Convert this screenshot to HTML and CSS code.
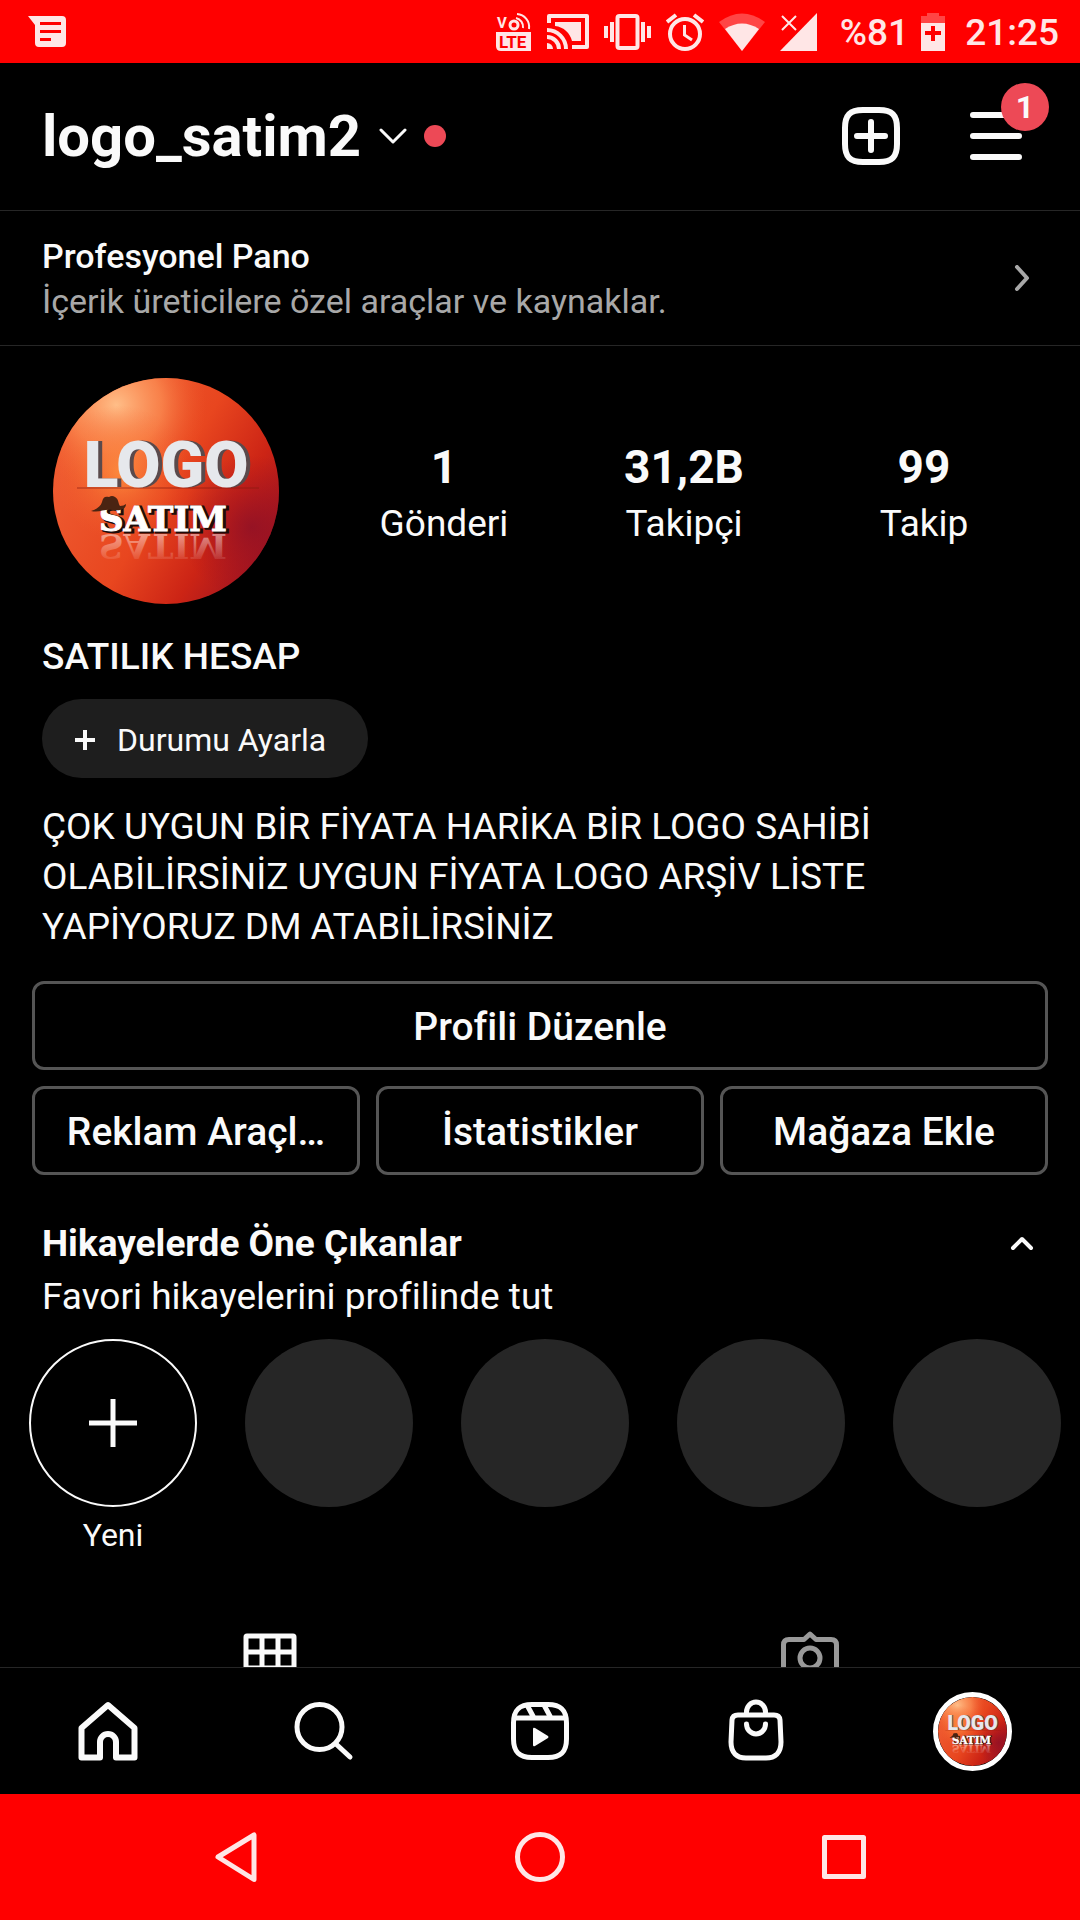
FILE: index.html
```html
<!DOCTYPE html>
<html lang="tr">
<head>
<meta charset="utf-8">
<meta name="viewport" content="width=device-width, initial-scale=1">
<title>logo_satim2</title>
<link rel="stylesheet" href="styles.css">
</head>
<body>
<svg class="defs" aria-hidden="true">
  <defs>
    <linearGradient id="ball" x1="0.1" y1="0.3" x2="0.95" y2="0.8">
      <stop offset="0" stop-color="#ee5a30"/>
      <stop offset="0.45" stop-color="#e8461f"/>
      <stop offset="0.75" stop-color="#cc2415"/>
      <stop offset="1" stop-color="#a01420"/>
    </linearGradient>
    <radialGradient id="glow" cx="0.28" cy="0.12" r="0.4">
      <stop offset="0" stop-color="#ffbe88"/>
      <stop offset="0.5" stop-color="#ff9a5c" stop-opacity="0.65"/>
      <stop offset="1" stop-color="#f4602c" stop-opacity="0"/>
    </radialGradient>
    <radialGradient id="warm" cx="0.3" cy="0.42" r="0.3">
      <stop offset="0" stop-color="#ff9440" stop-opacity="0.8"/>
      <stop offset="1" stop-color="#f4602c" stop-opacity="0"/>
    </radialGradient>
    <radialGradient id="shade" cx="0.88" cy="0.66" r="0.32">
      <stop offset="0" stop-color="#8e1026" stop-opacity="0.8"/>
      <stop offset="1" stop-color="#a01020" stop-opacity="0"/>
    </radialGradient>
    <linearGradient id="fade" x1="0" y1="0" x2="0" y2="1">
      <stop offset="0" stop-color="#fff" stop-opacity="0"/>
      <stop offset="1" stop-color="#fff" stop-opacity="0.6"/>
    </linearGradient>
    <symbol id="logo" viewBox="0 0 226 226">
      <circle cx="113" cy="113" r="113" fill="url(#ball)"/>
      <circle cx="113" cy="113" r="113" fill="url(#glow)"/>
      <circle cx="113" cy="113" r="113" fill="url(#warm)"/>
      <circle cx="113" cy="113" r="113" fill="url(#shade)"/>
      <path d="M24 110H206" stroke="#8a1a10" stroke-width="1" opacity="0.7"/>
      <text class="logo-top logo-depth" x="117" y="109" text-anchor="middle">LOGO</text>
      <text class="logo-top" x="113" y="109" text-anchor="middle">LOGO</text>
      <text class="logo-bottom logo-mirror" x="110" y="-156" text-anchor="middle" transform="scale(1 -1)">SATIM</text>
      <text class="logo-bottom logo-dark" x="112" y="154" text-anchor="middle">SATIM</text>
      <text class="logo-bottom logo-face" x="110" y="153" text-anchor="middle">SATIM</text>
      <path d="M38 133C44 131 48 128 49 124C50 119 52 118 56 119Q59 117 62 119C66 121 65 126 67 128Q71 128 73 126C73 132 66 133 59 132C51 131 46 135 38 133Z" fill="#4a2412"/>
    </symbol>
  </defs>
</svg>

<div class="screen">
  <header class="status">
    <svg class="status-note" width="38" height="32" viewBox="0 0 38 32" aria-hidden="true"><path fill="currentColor" fill-rule="evenodd" d="M0 0H34Q38 0 38 4V27Q38 31 34 31H11Q7 31 7 27V9ZM12 6V9H33V6ZM12 14V17H33V14ZM12 22V25H23V22Z"/></svg>
    <div class="status-icons">
      <svg width="36" height="42" viewBox="0 -2 36 42" aria-hidden="true">
        <text class="volte" x="1" y="15">V</text>
        <g fill="none" stroke="currentColor">
          <circle cx="18" cy="12" r="4" stroke-width="3"/>
          <path d="M20 5A9 9 0 0 1 27 15M21 1A13 13 0 0 1 33 16" stroke-width="2"/>
        </g>
        <path fill="currentColor" d="M0 19H35V38H5Q0 38 0 33Z"/>
        <text class="volte volte-cut" x="3" y="35">LTE</text>
      </svg>
      <svg width="42" height="35" viewBox="0 0 42 35" aria-hidden="true">
        <path d="M2 9V2H40V33H25" fill="none" stroke="currentColor" stroke-width="4" stroke-linejoin="round"/>
        <path d="M8 8H34V27H25C23 19 17 13 8 12Z" fill="currentColor"/>
        <path d="M0 29A6 6 0 0 1 6 35H0Z" fill="currentColor"/>
        <path d="M0 23A12 12 0 0 1 12 35M0 16A19 19 0 0 1 19 35" fill="none" stroke="currentColor" stroke-width="4"/>
      </svg>
      <svg width="47" height="36" viewBox="0 0 47 36" aria-hidden="true">
        <rect x="13.500" y="2" width="20" height="32" rx="2" fill="none" stroke="currentColor" stroke-width="4"/>
        <path d="M2 12V24M8 8V28M39 8V28M45 12V24" stroke="currentColor" stroke-width="4"/>
      </svg>
      <svg width="38" height="38" viewBox="0 0 38 38" aria-hidden="true">
        <g fill="none" stroke="currentColor">
          <circle cx="19" cy="21" r="15" stroke-width="4"/>
          <path d="M18.500 12V22L26 27" stroke-width="3"/>
          <path d="M1 9L10 2M28 2L37 9" stroke-width="4"/>
        </g>
      </svg>
      <svg width="46" height="38" viewBox="0 0 46 38" aria-hidden="true">
        <path d="M0 9Q23 -8 46 9L23 38Z" fill="currentColor" opacity="0.3"/>
        <path d="M6 16Q23 5 40 16L23 38Z" fill="currentColor"/>
      </svg>
      <svg width="38" height="38" viewBox="0 0 38 38" aria-hidden="true">
        <path d="M37 0V38H0Z" fill="currentColor"/>
        <path d="M2 3L16 17M16 3L2 17" stroke="currentColor" stroke-width="2"/>
      </svg>
    </div>
    <span class="battery-level">%81</span>
    <svg class="battery" width="24" height="38" viewBox="0 0 24 38" aria-hidden="true">
      <path d="M6 0H18V3H24V10H0V3H6Z" fill="currentColor" opacity="0.3"/>
      <path fill="currentColor" fill-rule="evenodd" d="M0 10H24V38H0ZM10 13V18H4V22H10V28H14V22H20V18H14V13Z"/>
    </svg>
    <time class="clock">21:25</time>
  </header>

  <main class="content">
    <div class="topbar">
      <button class="account" type="button">
        <span class="account-name">logo_satim2</span>
        <svg width="28" height="16" viewBox="0 0 28 16" aria-hidden="true"><path d="M2 2L14 14L26 2" fill="none" stroke="currentColor" stroke-width="3" stroke-linecap="round" stroke-linejoin="round"/></svg>
        <span class="dot"></span>
      </button>
      <button class="icon-button" type="button" aria-label="Oluştur">
        <svg width="60" height="60" viewBox="0 0 60 60" fill="none" stroke="currentColor" stroke-width="6" stroke-linecap="round" aria-hidden="true"><path d="M22 4H38C51 4 56 9 56 22V38C56 51 51 56 38 56H22C9 56 4 51 4 38V22C4 9 9 4 22 4Z"/><path d="M30 16V44M16 30H44"/></svg>
      </button>
      <button class="icon-button menu-button" type="button" aria-label="Menü">
        <svg width="54" height="48" viewBox="0 0 54 48" stroke="currentColor" stroke-width="6" stroke-linecap="round" aria-hidden="true"><path d="M4 3H50M4 24H50M4 45H50"/></svg>
        <span class="badge">1</span>
      </button>
    </div>

    <a class="panel" href="#pano">
      <span class="panel-text">
        <strong class="panel-title">Profesyonel Pano</strong>
        <span class="panel-sub">İçerik üreticilere özel araçlar ve kaynaklar.</span>
      </span>
      <svg width="16" height="28" viewBox="0 0 16 28" aria-hidden="true"><path d="M3 2L13 13L3 24" fill="none" stroke="currentColor" stroke-width="4" stroke-linecap="round" stroke-linejoin="round"/></svg>
    </a>

    <section class="profile">
      <svg class="avatar" role="img" aria-label="Profil fotoğrafı"><use href="#logo"/></svg>
      <div class="stats">
        <a class="stat" href="#gonderi"><b>1</b><span>Gönderi</span></a>
        <a class="stat" href="#takipci"><b>31,2B</b><span>Takipçi</span></a>
        <a class="stat" href="#takip"><b>99</b><span>Takip</span></a>
      </div>
    </section>

    <section class="about">
      <h1 class="name">SATILIK HESAP</h1>
      <button class="status-pill" type="button">
        <svg width="20" height="20" viewBox="0 0 20 20" aria-hidden="true"><path d="M10 0V20M0 10H20" stroke="currentColor" stroke-width="4"/></svg>
        Durumu Ayarla
      </button>
      <p class="bio">ÇOK UYGUN BİR FİYATA HARİKA BİR LOGO SAHİBİ OLABİLİRSİNİZ UYGUN FİYATA LOGO ARŞİV LİSTE YAPİYORUZ DM ATABİLİRSİNİZ</p>
    </section>

    <section class="actions">
      <button class="action action-wide" type="button">Profili Düzenle</button>
      <button class="action" type="button">Reklam Araçl…</button>
      <button class="action" type="button">İstatistikler</button>
      <button class="action" type="button">Mağaza Ekle</button>
    </section>

    <section class="highlights">
      <div class="highlights-head">
        <h2 class="highlights-title">Hikayelerde Öne Çıkanlar</h2>
        <button class="icon-button" type="button" aria-label="Gizle">
          <svg width="24" height="16" viewBox="0 0 24 16" aria-hidden="true"><path d="M3 12L12 3L21 12" fill="none" stroke="currentColor" stroke-width="4" stroke-linecap="round" stroke-linejoin="round"/></svg>
        </button>
      </div>
      <p class="highlights-sub">Favori hikayelerini profilinde tut</p>
      <ul class="rings">
        <li class="ring-item">
          <button class="ring ring-new" type="button" aria-labelledby="yeni">
            <svg width="48" height="48" viewBox="0 0 48 48" aria-hidden="true"><path d="M24 0V48M0 24H48" stroke="currentColor" stroke-width="5"/></svg>
          </button>
          <span id="yeni">Yeni</span>
        </li>
        <li class="ring"></li>
        <li class="ring"></li>
        <li class="ring"></li>
        <li class="ring"></li>
      </ul>
    </section>

    <nav class="tabs" aria-label="Gönderiler">
      <a class="tab tab-active" href="#izgara" aria-label="Izgara">
        <svg width="54" height="54" viewBox="0 0 54 54" fill="none" stroke="currentColor" stroke-width="5" aria-hidden="true"><rect x="3" y="3" width="48" height="48" rx="1"/><path d="M19 3V51M35 3V51M3 19H51M3 35H51"/></svg>
      </a>
      <a class="tab" href="#etiketler" aria-label="Etiketlenenler">
        <svg width="60" height="60" viewBox="0 0 60 60" fill="none" stroke="currentColor" stroke-width="5" stroke-linejoin="round" aria-hidden="true"><path d="M3.500 60V15Q3.500 9.500 9 9.500H24L30 4L36 9.500H51Q56.500 9.500 56.500 15V60"/><circle cx="30" cy="28" r="10"/></svg>
      </a>
    </nav>
  </main>

  <nav class="bottom" aria-label="Ana menü">
    <a class="bottom-link" href="#ana" aria-label="Ana sayfa">
      <svg width="60" height="60" viewBox="0 0 60 60" fill="none" stroke="currentColor" stroke-width="6" stroke-linejoin="round" aria-hidden="true"><path d="M3.500 27L30 4L56.500 27V56.500H38V41A8 8 0 0 0 22 41V56.500H3.500Z"/></svg>
    </a>
    <a class="bottom-link" href="#ara" aria-label="Ara">
      <svg width="60" height="60" viewBox="0 0 60 60" fill="none" stroke="currentColor" stroke-width="5" stroke-linecap="round" aria-hidden="true"><circle cx="25.500" cy="26" r="22.500"/><path d="M42 43L56 56"/></svg>
    </a>
    <a class="bottom-link" href="#reels" aria-label="Reels">
      <svg width="60" height="60" viewBox="0 0 60 60" fill="none" stroke="currentColor" stroke-width="5" aria-hidden="true"><path d="M22 3.500H38C51 3.500 56.500 9 56.500 22V38C56.500 51 51 56.500 38 56.500H22C9 56.500 3.500 51 3.500 38V22C3.500 9 9 3.500 22 3.500Z"/><path d="M4 17H56M17 4L24 17M34 4L41 17"/><path d="M23 28V44Q23 46 25 45L38 37Q39 36 38 35L25 27Q23 26 23 28Z" fill="currentColor" stroke="none"/></svg>
    </a>
    <a class="bottom-link" href="#magaza" aria-label="Mağaza">
      <svg width="60" height="64" viewBox="0 0 60 64" fill="none" stroke="currentColor" stroke-width="5" stroke-linecap="round" aria-hidden="true"><path d="M12 16H48Q53.500 16 54 21L55 43C55 54 49 59 40 59H20C11 59 5 54 5 43L6 21Q6.500 16 12 16Z"/><path d="M20.500 15V13A9.500 10 0 0 1 39.500 13V15"/><path d="M20.500 25A9.500 10 0 0 0 39.500 25"/></svg>
    </a>
    <a class="bottom-link" href="#profil" aria-label="Profil">
      <svg class="avatar-small" aria-hidden="true"><use href="#logo"/></svg>
    </a>
  </nav>

  <footer class="system">
    <button class="icon-button" type="button" aria-label="Geri">
      <svg width="52" height="52" viewBox="0 0 52 52" fill="none" stroke="currentColor" stroke-width="5" stroke-linejoin="round" aria-hidden="true"><path d="M44 4V48.500L8 26Z"/></svg>
    </button>
    <button class="icon-button" type="button" aria-label="Ana ekran">
      <svg width="52" height="52" viewBox="0 0 52 52" fill="none" stroke="currentColor" stroke-width="5" aria-hidden="true"><circle cx="26" cy="26" r="22.500"/></svg>
    </button>
    <button class="icon-button" type="button" aria-label="Son uygulamalar">
      <svg width="52" height="52" viewBox="0 0 52 52" fill="none" stroke="currentColor" stroke-width="5" stroke-linejoin="round" aria-hidden="true"><rect x="6.500" y="6.500" width="39" height="39"/></svg>
    </button>
  </footer>
</div>
</body>
</html>
```
FILE: styles.css
```css
:root {
  --ink: #fafafa;
  --muted: #a8a8a8;
  --line: #262626;
  --system: #ff0000;
  --alert: #ed4956;
}

* { box-sizing: border-box; }

body {
  margin: 0;
  background: #000;
  color: var(--ink);
  font-family: Roboto, "Liberation Sans", sans-serif;
  font-size: 37px;
  line-height: 50px;
}

button {
  margin: 0;
  padding: 0;
  border: 0;
  background: none;
  color: inherit;
  font: inherit;
}

a { color: inherit; text-decoration: none; }
h1, h2, p, ul { margin: 0; padding: 0; }
ul { list-style: none; }
svg { display: block; flex: none; }

.defs { position: absolute; width: 0; height: 0; }

.screen { display: flex; flex-direction: column; height: 100vh; }

/* Status bar */
.status {
  display: flex;
  flex: none;
  align-items: center;
  height: 63px;
  padding: 0 21px 0 28px;
  background: var(--system);
  color: #ffe6e6;
}
.status-icons {
  display: flex;
  align-items: center;
  gap: 15px;
  margin-left: auto;
}
.battery-level, .clock { padding-top: 2px; font-weight: 500; }
.battery-level { margin-left: 22px; }
.battery { margin: 0 20px 0 12px; }
.volte { font-size: 15px; font-weight: 700; fill: currentColor; }
.volte-cut { font-size: 17px; fill: var(--system); }

/* Scrolling profile area */
.content {
  flex: 1;
  min-height: 0;
  overflow-y: auto;
  scrollbar-width: none;
}

.topbar {
  display: flex;
  align-items: center;
  gap: 68px;
  height: 148px;
  padding: 0 57px 2px 42px;
  border-bottom: 1px solid var(--line);
}
.account { display: flex; align-items: center; margin-right: auto; }
.account-name { margin-right: 18px; font-size: 58px; line-height: 68px; font-weight: 700; }
.dot {
  width: 22px;
  height: 22px;
  margin-left: 17px;
  border-radius: 50%;
  background: var(--alert);
}
.icon-button { display: flex; align-items: center; justify-content: center; }
.menu-button { position: relative; }
.badge {
  position: absolute;
  top: -29px;
  right: -26px;
  width: 48px;
  height: 48px;
  border-radius: 50%;
  background: var(--alert);
  font-size: 32px;
  line-height: 48px;
  font-weight: 700;
  text-align: center;
}

.panel {
  display: flex;
  align-items: center;
  justify-content: space-between;
  padding: 23px 50px 21px 42px;
  border-bottom: 1px solid var(--line);
  font-size: 34px;
  line-height: 45px;
  color: var(--muted);
}
.panel-text { display: flex; flex-direction: column; }
.panel-title { color: var(--ink); font-weight: 500; }

.profile {
  display: flex;
  align-items: center;
  gap: 45px;
  padding: 32px 36px 0 53px;
}
.avatar { width: 226px; height: 226px; }
.logo-top { font-family: Roboto, sans-serif; font-size: 64px; font-weight: 900; fill: #e6e8ec; }
.logo-depth { fill: #5a4a4c; }
.logo-bottom { font-family: "DejaVu Serif", serif; font-size: 34px; font-weight: 700; }
.logo-face { fill: #fff; stroke: #fff; stroke-width: 1px; }
.logo-dark { fill: #200c0a; stroke: #200c0a; stroke-width: 3px; }
.logo-mirror { fill: url(#fade); }

.stats {
  display: grid;
  grid-template-columns: repeat(3, 1fr);
  flex: 1;
  padding-top: 6px;
}
.stat { display: flex; flex-direction: column; align-items: center; gap: 4px; }
.stat b { font-size: 46px; line-height: 56px; }

.about { padding: 28px 42px 0; }
.name { font-size: 37px; font-weight: 500; }
.status-pill {
  display: flex;
  align-items: center;
  gap: 22px;
  height: 79px;
  margin: 17px 0 24px;
  padding: 2px 42px 0 33px;
  border-radius: 40px;
  background: #1e1e1e;
  font-size: 32px;
}

.actions {
  display: grid;
  grid-template-columns: repeat(3, 1fr);
  gap: 16px;
  padding: 29px 32px 0;
}
.action {
  height: 89px;
  padding-top: 2px;
  border: 3px solid #555;
  border-radius: 12px;
  font-size: 39px;
  font-weight: 500;
  white-space: nowrap;
}
.action-wide { grid-column: 1 / -1; }

.highlights { padding-top: 44px; }
.highlights-head {
  display: flex;
  align-items: center;
  justify-content: space-between;
  padding: 0 46px 0 42px;
}
.highlights-title { font-size: 37px; font-weight: 700; }
.highlights-sub { padding: 3px 42px 0; }
.rings {
  display: flex;
  gap: 48px;
  padding: 17px 0 0 29px;
  overflow: hidden;
  font-size: 32px;
  line-height: 40px;
}
.ring-item { display: flex; flex-direction: column; align-items: center; gap: 8px; }
.ring {
  flex: none;
  width: 168px;
  height: 168px;
  border-radius: 50%;
  background: #262626;
}
.ring-new {
  display: flex;
  align-items: center;
  justify-content: center;
  border: 2px solid var(--ink);
  background: none;
}

.tabs { display: flex; margin-top: 47px; }
.tab {
  display: flex;
  flex: 1;
  align-items: center;
  justify-content: center;
  height: 116px;
  color: #999;
}
.tab-active { color: var(--ink); }

/* App navigation */
.bottom {
  display: flex;
  flex: none;
  height: 127px;
  border-top: 1px solid var(--line);
}
.bottom-link { display: flex; flex: 1; align-items: center; justify-content: center; }
.avatar-small {
  width: 79px;
  height: 79px;
  border: 5px solid #fff;
  border-radius: 50%;
}

/* System navigation */
.system {
  display: grid;
  grid-template-columns: repeat(3, 1fr);
  flex: none;
  height: 126px;
  padding: 0 84px;
  background: var(--system);
  color: #ffe6e6;
}
```
